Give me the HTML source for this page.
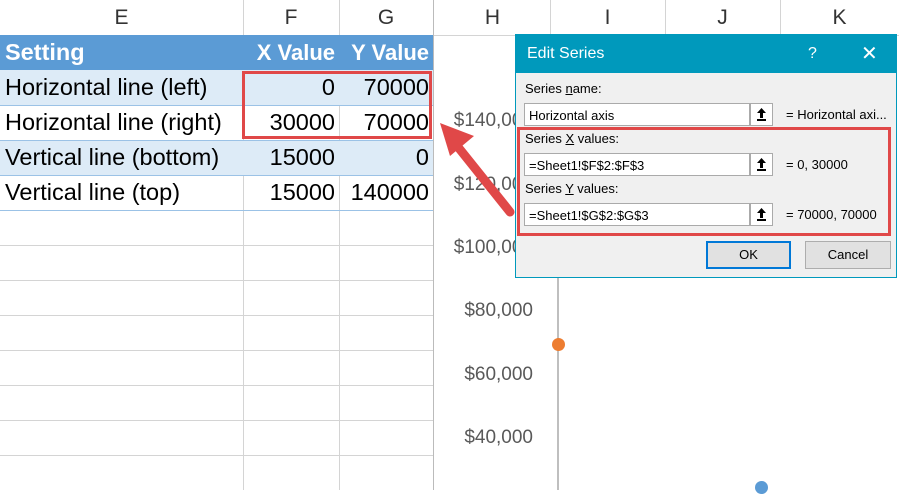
<!DOCTYPE html>
<html><head><style>
body{margin:0;width:899px;height:490px;overflow:hidden;background:#fff;font-family:"Liberation Sans",sans-serif;position:relative}
.a{position:absolute}
.hdr{height:35px;top:0;background:#fff;border-bottom:1px solid #d4d4d4;}
.col{top:0;height:35px;line-height:35px;text-align:center;font-size:21px;color:#333}
.cell{position:absolute;height:35px;line-height:35px;font-size:23.5px;color:#000;white-space:nowrap;box-sizing:border-box}
.vl{position:absolute;width:1px;background:#d4d4d4}
.hl{position:absolute;height:1px;background:#d4d4d4}
.ylab{position:absolute;right:366px;font-size:19px;color:#595959}
.dlg{font-size:13px;color:#000}
.in{position:absolute;background:#fff;border:1px solid #aaa;height:23px;line-height:23px;padding-left:4px;box-sizing:border-box}
.btn{position:absolute;width:23px;height:23px;border:1px solid #aaa;background:#fff;box-sizing:border-box}
</style></head><body>
<div class="a hdr" style="left:0;width:899px"></div>
<div class="vl" style="left:243px;top:0;height:490px"></div>
<div class="vl" style="left:339px;top:0;height:490px"></div>
<div class="vl" style="left:433px;top:0;height:490px;background:#bbb"></div>
<div class="vl" style="left:550px;top:0;height:35px"></div>
<div class="vl" style="left:665px;top:0;height:35px"></div>
<div class="vl" style="left:780px;top:0;height:35px"></div>
<div class="a col" style="left:0;width:243px">E</div>
<div class="a col" style="left:243px;width:96px">F</div>
<div class="a col" style="left:339px;width:94px">G</div>
<div class="a col" style="left:435px;width:115px">H</div>
<div class="a col" style="left:550px;width:115px">I</div>
<div class="a col" style="left:665px;width:115px">J</div>
<div class="a col" style="left:780px;width:119px">K</div>
<div class="a" style="left:0;top:35px;width:433px;height:35px;background:#5b9bd5"></div>
<div class="a" style="left:0;top:70px;width:433px;height:35px;background:#ddebf7"></div>
<div class="a" style="left:0;top:140px;width:433px;height:35px;background:#ddebf7"></div>
<div class="hl" style="left:0;top:105px;width:433px;background:#9bc2e6"></div>
<div class="hl" style="left:0;top:140px;width:433px;background:#9bc2e6"></div>
<div class="hl" style="left:0;top:175px;width:433px;background:#9bc2e6"></div>
<div class="hl" style="left:0;top:210px;width:433px;background:#9bc2e6"></div>
<div class="hl" style="left:0;top:245px;width:433px"></div>
<div class="hl" style="left:0;top:280px;width:433px"></div>
<div class="hl" style="left:0;top:315px;width:433px"></div>
<div class="hl" style="left:0;top:350px;width:433px"></div>
<div class="hl" style="left:0;top:385px;width:433px"></div>
<div class="hl" style="left:0;top:420px;width:433px"></div>
<div class="hl" style="left:0;top:455px;width:433px"></div>
<div class="cell" style="left:5px;top:35px;color:#fff;font-weight:bold">Setting</div>
<div class="cell" style="left:243px;top:35px;width:92px;text-align:right;color:#fff;font-weight:bold;font-size:22px">X Value</div>
<div class="cell" style="left:339px;top:35px;width:90px;text-align:right;color:#fff;font-weight:bold;font-size:22px">Y Value</div>
<div class="cell" style="left:5px;top:70px">Horizontal line (left)</div>
<div class="cell" style="left:243px;top:70px;width:92px;text-align:right">0</div>
<div class="cell" style="left:339px;top:70px;width:90px;text-align:right">70000</div>
<div class="cell" style="left:5px;top:105px">Horizontal line (right)</div>
<div class="cell" style="left:243px;top:105px;width:92px;text-align:right">30000</div>
<div class="cell" style="left:339px;top:105px;width:90px;text-align:right">70000</div>
<div class="cell" style="left:5px;top:140px">Vertical line (bottom)</div>
<div class="cell" style="left:243px;top:140px;width:92px;text-align:right">15000</div>
<div class="cell" style="left:339px;top:140px;width:90px;text-align:right">0</div>
<div class="cell" style="left:5px;top:175px">Vertical line (top)</div>
<div class="cell" style="left:243px;top:175px;width:92px;text-align:right">15000</div>
<div class="cell" style="left:339px;top:175px;width:90px;text-align:right">140000</div>
<div class="a" style="left:242px;top:71px;width:190px;height:68px;border:3px solid #e04848;box-sizing:border-box"></div>
<div class="vl" style="left:557px;top:35px;height:455px;background:#bfbfbf;width:2px"></div>
<div class="ylab" style="top:110px">$140,000</div>
<div class="ylab" style="top:174px">$120,000</div>
<div class="ylab" style="top:237px">$100,000</div>
<div class="ylab" style="top:300px">$80,000</div>
<div class="ylab" style="top:364px">$60,000</div>
<div class="ylab" style="top:427px">$40,000</div>
<div class="a" style="left:552px;top:338px;width:13px;height:13px;border-radius:50%;background:#ed7d31"></div>
<div class="a" style="left:755px;top:481px;width:13px;height:13px;border-radius:50%;background:#5b9bd5"></div>
<div class="a dlg" style="left:515px;top:34px;width:382px;height:244px;background:#f0f0f0;border:1px solid #0099bc;box-sizing:border-box">
<div class="a" style="left:0;top:0;width:380px;height:38px;background:#0099bc;color:#fff;font-size:16px;line-height:38px"><span style="margin-left:11px">Edit Series</span><span class="a" style="left:292px;top:0">?</span><span class="a" style="left:345px;top:0;font-size:20px">✕</span></div>
<div class="a" style="left:9px;top:46px">Series <u>n</u>ame:</div>
<div class="in" style="left:8px;top:68px;width:226px">Horizontal axis</div>
<div class="btn" style="left:234px;top:68px"><svg width="21" height="21"><path d="M10.5 4 L15 9 H12 V14 H9 V9 H6 Z" fill="#000"/><rect x="6" y="15" width="9" height="2" fill="#000"/></svg></div>
<div class="a" style="left:270px;top:72px">= Horizontal axi...</div>
<div class="a" style="left:9px;top:96px">Series <u>X</u> values:</div>
<div class="in" style="left:8px;top:118px;width:226px">=Sheet1!$F$2:$F$3</div>
<div class="btn" style="left:234px;top:118px"><svg width="21" height="21"><path d="M10.5 4 L15 9 H12 V14 H9 V9 H6 Z" fill="#000"/><rect x="6" y="15" width="9" height="2" fill="#000"/></svg></div>
<div class="a" style="left:270px;top:122px">= 0, 30000</div>
<div class="a" style="left:9px;top:146px">Series <u>Y</u> values:</div>
<div class="in" style="left:8px;top:168px;width:226px">=Sheet1!$G$2:$G$3</div>
<div class="btn" style="left:234px;top:168px"><svg width="21" height="21"><path d="M10.5 4 L15 9 H12 V14 H9 V9 H6 Z" fill="#000"/><rect x="6" y="15" width="9" height="2" fill="#000"/></svg></div>
<div class="a" style="left:270px;top:172px">= 70000, 70000</div>
<div class="a" style="left:190px;top:206px;width:85px;height:28px;border:2px solid #0078d7;background:#e1e1e1;box-sizing:border-box;text-align:center;line-height:24px">OK</div>
<div class="a" style="left:289px;top:206px;width:86px;height:28px;border:1px solid #adadad;background:#e1e1e1;box-sizing:border-box;text-align:center;line-height:26px">Cancel</div>
</div>
<div class="a" style="left:517px;top:127px;width:374px;height:109px;border:3px solid #e04848;box-sizing:border-box"></div>
<svg class="a" style="left:0;top:0" width="899" height="490"><line x1="510" y1="212" x2="458" y2="147" stroke="#e04848" stroke-width="9" stroke-linecap="round"/><polygon points="440,123 474,136 450,156" fill="#e04848"/></svg>
</body></html>
